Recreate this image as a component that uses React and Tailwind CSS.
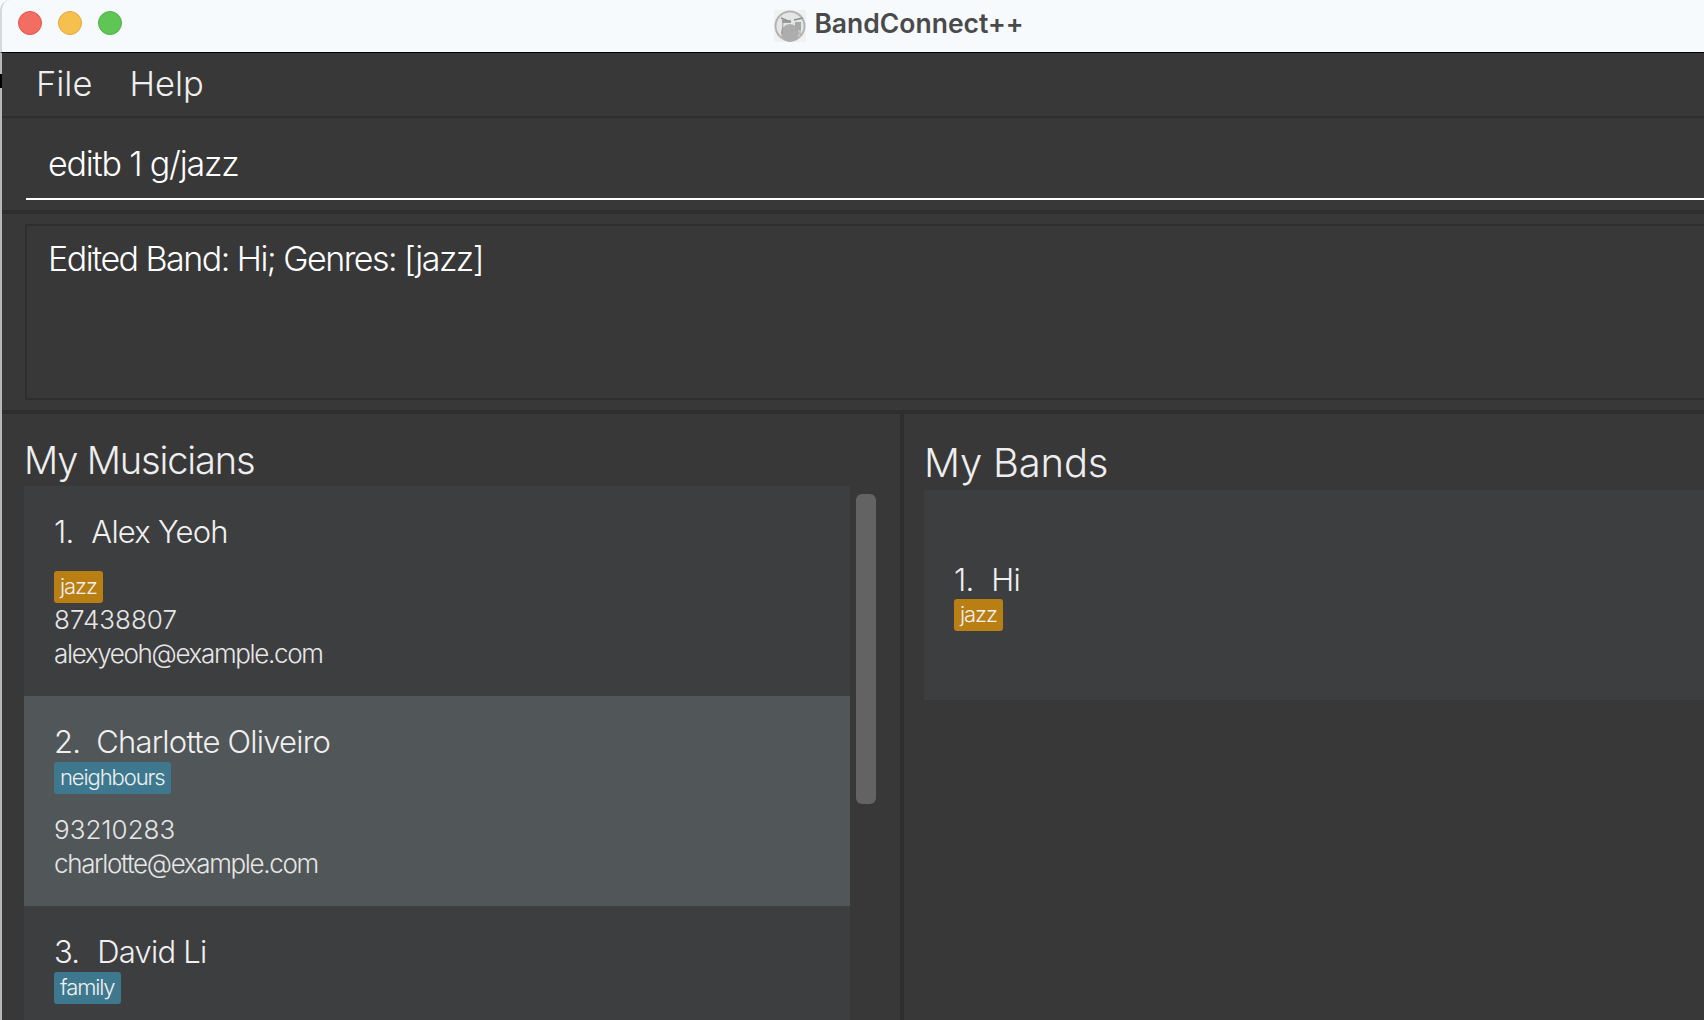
const MUSICIANS = [
  { id: 1, name: 'Alex Yeoh', nameInset: 'ml-[2px]', tag: 'jazz', tagColor: 'bg-[#b97f12]', phone: '87438807', email: 'alexyeoh@example.com', tagGap: 'mt-[21px]', infoGap: 'mt-0' },
  { id: 2, name: 'Charlotte Oliveiro', nameInset: 'ml-0', tag: 'neighbours', tagColor: 'bg-[#3e788f]', phone: '93210283', email: 'charlotte@example.com', selected: true, tagGap: 'mt-[2px]', infoGap: 'mt-[19px]' },
  { id: 3, name: 'David Li', nameInset: 'ml-[2px]', tag: 'family', tagColor: 'bg-[#3e788f]', tagGap: 'mt-[2px]', infoGap: 'mt-[19px]' },
]

function Tag({ color, children }) {
  return (
    <span className={`inline-block h-[32px] rounded-[3px] px-[6px] text-[22px] leading-[31px] tracking-[-0.05em] text-[#f0f0f0] ${color}`}>
      {children}
    </span>
  )
}

function DrumLogo() {
  return (
    <svg width="32" height="32" viewBox="0 0 32 32" className="shrink-0">
      <rect width="32" height="32" fill="#f0f2f2" />
      <circle cx="16" cy="16" r="14.5" fill="#e4e6e6" stroke="#b4b4b4" strokeWidth="2" />
      <circle cx="16" cy="23" r="9" fill="#adadad" />
      <rect x="8" y="10" width="9" height="3" fill="#9c9c9c" />
      <rect x="21" y="12" width="6" height="8" fill="#a8a8a8" />
      <path d="M7 8 L14 11 M20 10 L29 8" stroke="#8f8f8f" strokeWidth="1.5" />
      <path d="M9 13 L8 24 M26 20 L26 25" stroke="#9a9a9a" strokeWidth="1" />
    </svg>
  )
}

function MusicianCard({ m }) {
  return (
    <div className={`h-[210px] pl-[30px] pt-[28px] ${m.selected ? 'bg-[#515658]' : 'bg-[#3d3e40]'}`}>
      <p className="text-[31px] leading-[36px] tracking-tight text-[#f0f0f0]">
        {m.id}.&nbsp;&nbsp;<span className={m.nameInset}>{m.name}</span>
      </p>
      <div className={`h-[32px] ${m.tagGap}`}>
        <Tag color={m.tagColor}>{m.tag}</Tag>
      </div>
      {m.phone && (
        <div className={`text-[26px] leading-[34px] text-[#e6e6e6] ${m.infoGap}`}>
          <p>{m.phone}</p>
          <p className="tracking-[-0.052em]">{m.email}</p>
        </div>
      )}
    </div>
  )
}

export default function App() {
  return (
    <div className="relative h-[1020px] w-[1704px] overflow-hidden bg-[#f6fafc] font-['Inter',sans-serif] font-light">
      {/* title bar */}
      <div className="relative flex h-[52px] items-center justify-center rounded-tl-[10px] border-l-2 border-[#d8d8d8] bg-[#f6fafc] pl-[92px]">
        <div className="absolute left-[16px] top-[11px] flex gap-[16px]">
          <span className="h-[24px] w-[24px] rounded-full border border-[#e0564e] bg-[#f26d62]" />
          <span className="h-[24px] w-[24px] rounded-full border border-[#e0a93f] bg-[#f6c04f]" />
          <span className="h-[24px] w-[24px] rounded-full border border-[#4fb04a] bg-[#5fc655]" />
        </div>
        <div className="flex items-center gap-[8px]">
          <DrumLogo />
          <span className="pb-[4px] text-[26.5px] font-semibold text-[#4a4a4a]">BandConnect++</span>
        </div>
      </div>

      {/* little dark nick on the window edge */}
      <div className="absolute left-0 top-[74px] h-[14px] w-[2px] bg-black" />

      <div className="flex h-[968px] flex-col border-l-2 border-t border-[#b8b8b8] border-t-black bg-[#383838]">
        {/* menu */}
        <div className="flex h-[65px] shrink-0 items-center gap-[37px] border-b-2 border-[#2e2e2e] pb-[2px] pl-[34px] text-[34.5px] text-[#eeeeee]">
          <span>File</span>
          <span>Help</span>
        </div>

        {/* command box */}
        <div className="h-[92px] shrink-0 pl-[24px] pt-[14px]">
          <div className="h-[68px] border-b-2 border-white pl-[22px] text-[34px] leading-[64px] tracking-[-0.035em] text-white">
            editb 1 g/jazz
          </div>
        </div>

        {/* result display */}
        <div className="h-[204px] shrink-0 border-y-4 border-[#2e2e2e] pl-[23px] pt-[10px]">
          <div className="h-[176px] border-2 border-r-0 border-[#2e2e2e] pl-[21px] text-[34px] leading-[66px] tracking-[-0.045em] text-white">
            Edited Band: Hi; Genres: [jazz]
          </div>
        </div>

        {/* lists */}
        <div className="flex min-h-0 flex-1">
          <div className="w-[902px] shrink-0 overflow-hidden border-r-4 border-[#2e2e2e] pl-[22px]">
            <h2 className="h-[72px] pt-[21px] text-[38px] leading-[50px] tracking-[-0.03em] text-[#eeeeee]">My Musicians</h2>
            <div className="flex">
              <div className="w-[826px] shrink-0">
                {MUSICIANS.map((m) => (
                  <MusicianCard key={m.id} m={m} />
                ))}
              </div>
              <div className="ml-[6px] mt-[8px] h-[310px] w-[20px] rounded-[6px] bg-[#636363]" />
            </div>
          </div>

          <div className="min-w-0 flex-1 pl-[20px]">
            <h2 className="h-[76px] pt-[24px] text-[40px] leading-[50px] tracking-[-0.005em] text-[#eeeeee]">My Bands</h2>
            <div className="h-[210px] bg-[#3d3e40] pl-[30px] pt-[71px]">
              <p className="text-[31px] leading-[38px] tracking-tight text-[#f0f0f0]">
                1.&nbsp;&nbsp;<span className="ml-[2px]">Hi</span>
              </p>
              <Tag color="bg-[#b97f12]">jazz</Tag>
            </div>
          </div>
        </div>
      </div>
    </div>
  )
}
